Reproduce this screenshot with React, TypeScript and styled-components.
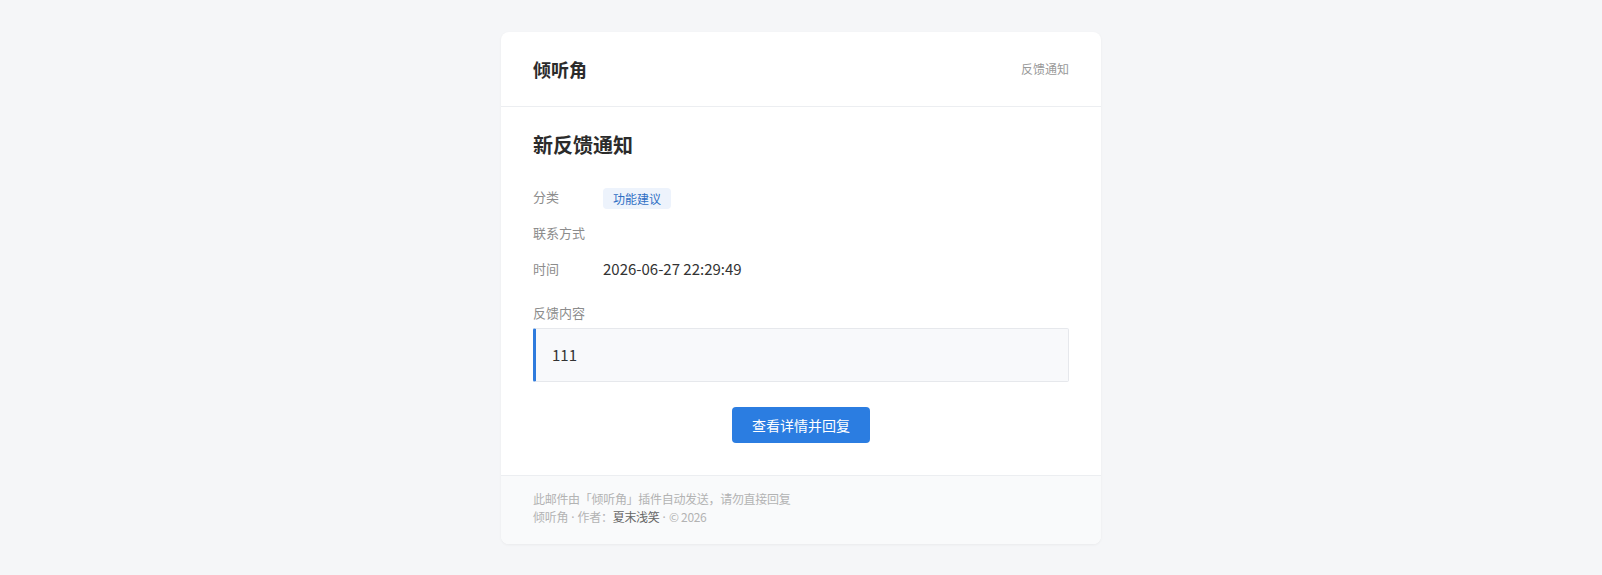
import React from "react";
import styled, { createGlobalStyle } from "styled-components";

const GlobalStyle = createGlobalStyle`
  html, body {
    margin: 0;
    padding: 0;
    background: #f5f6f8;
  }
  body {
    font-family: "Noto Sans CJK SC", "Noto Sans", sans-serif;
    color: #333;
  }
`;

const Page = styled.div`
  display: flex;
  justify-content: center;
  padding: 32px 0 32px;
`;

const Card = styled.div`
  width: 600px;
  background: #ffffff;
  border-radius: 8px;
  box-shadow: 0 1px 3px rgba(0, 0, 0, 0.05);
  overflow: hidden;
`;

const Header = styled.div`
  display: flex;
  align-items: center;
  justify-content: space-between;
  padding: 24px 32px;
  border-bottom: 1px solid #eceef1;
`;

const Brand = styled.div`
  font-size: 18px;
  font-weight: 700;
  line-height: 26px;
  color: #2b2b2b;
`;

const HeaderTag = styled.div`
  font-size: 12px;
  line-height: 18px;
  color: #999;
`;

const Body = styled.div`
  padding: 24px 32px 32px;
`;

const Title = styled.h1`
  margin: 0 0 20px;
  font-size: 20px;
  line-height: 28px;
  font-weight: 700;
  color: #2b2b2b;
`;

const InfoList = styled.div`
  display: flex;
  flex-direction: column;
`;

const InfoRow = styled.div`
  display: grid;
  grid-template-columns: 70px 1fr;
  align-items: center;
  min-height: 36px;
`;

const Label = styled.span`
  font-size: 13px;
  line-height: 20px;
  color: #8c8c8c;
`;

const Value = styled.span`
  font-size: 15px;
  line-height: 20px;
  color: #333;
`;

const Tag = styled.span`
  justify-self: start;
  display: inline-block;
  padding: 0 10px;
  height: 21px;
  line-height: 21px;
  font-size: 12px;
  color: #2f6fc4;
  background: #edf3fc;
  border-radius: 4px;
  margin-top: 2px;
`;

const ContentLabel = styled.div`
  margin-top: 16px;
  font-size: 13px;
  line-height: 20px;
  color: #8c8c8c;
`;

const ContentBox = styled.div`
  margin-top: 5px;
  padding: 15px 16px;
  background: #f8f9fb;
  border: 1px solid #e6e8ec;
  border-left: 3px solid #2f7bdd;
  border-radius: 2px;
  font-size: 15px;
  line-height: 22px;
  color: #333;
`;

const Actions = styled.div`
  display: flex;
  justify-content: center;
  margin-top: 25px;
`;

const Button = styled.a`
  display: inline-block;
  height: 36px;
  line-height: 36px;
  padding: 0 20px;
  background: #2b7de1;
  color: #ffffff;
  font-size: 14px;
  border-radius: 4px;
  text-decoration: none;
`;

const Footer = styled.div`
  padding: 14px 32px 17px;
  background: #f9fafb;
  border-top: 1px solid #eceef1;
  font-size: 12px;
  line-height: 18px;
  letter-spacing: -0.3px;
  color: #b3b3b3;
`;

const Dot = styled.span`
  font-family: "Noto Sans", sans-serif;
  letter-spacing: 0;
`;

const Author = styled.span`
  color: #666;
`;

export default function App() {
  return (
    <>
      <GlobalStyle />
      <Page>
        <Card>
          <Header>
            <Brand>倾听角</Brand>
            <HeaderTag>反馈通知</HeaderTag>
          </Header>
          <Body>
            <Title>新反馈通知</Title>
            <InfoList>
              <InfoRow>
                <Label>分类</Label>
                <Tag>功能建议</Tag>
              </InfoRow>
              <InfoRow>
                <Label>联系方式</Label>
                <Value></Value>
              </InfoRow>
              <InfoRow>
                <Label>时间</Label>
                <Value>2026-06-27 22:29:49</Value>
              </InfoRow>
            </InfoList>
            <ContentLabel>反馈内容</ContentLabel>
            <ContentBox>111</ContentBox>
            <Actions>
              <Button href="#">查看详情并回复</Button>
            </Actions>
          </Body>
          <Footer>
            <div>此邮件由「倾听角」插件自动发送，请勿直接回复</div>
            <div>
              倾听角<Dot> · </Dot>作者：<Author>夏末浅笑</Author>
              <Dot> · </Dot>© 2026
            </div>
          </Footer>
        </Card>
      </Page>
    </>
  );
}
